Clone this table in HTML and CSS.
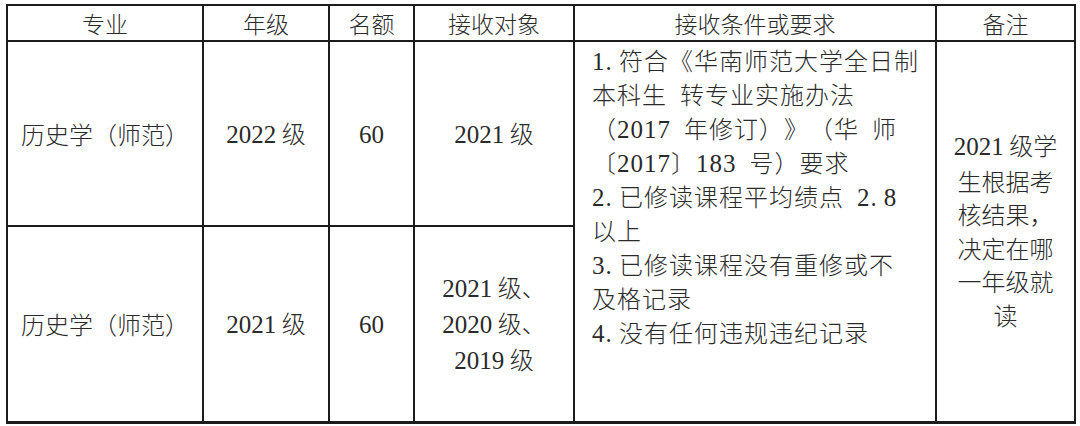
FILE: index.html
```html
<!DOCTYPE html>
<html lang="zh-CN">
<head>
<meta charset="utf-8">
<title>转专业接收表</title>
<link rel="stylesheet" href="styles.css">
</head>
<body>
<table class="grid">
  <colgroup>
    <col class="c1"><col class="c2"><col class="c3"><col class="c4"><col class="c5"><col class="c6">
  </colgroup>
  <tr class="head">
    <th>专业</th><th>年级</th><th>名额</th><th>接收对象</th><th>接收条件或要求</th><th>备注</th>
  </tr>
  <tr class="r1">
    <td>历史学（师范）</td>
    <td><span class="num">2022</span> 级</td>
    <td><span class="num">60</span></td>
    <td><span class="num">2021</span> 级</td>
    <td rowspan="2" class="req">
      <div class="line"><span class="num">1.</span> 符合《华南师范大学全日制</div>
      <div class="line">本科生&ensp;转专业实施办法</div>
      <div class="line">（<span class="num">2017</span>&ensp;年修订）》（华&ensp;师</div>
      <div class="line">〔<span class="num">2017</span>〕<span class="num">183</span>&ensp;号）要求</div>
      <div class="line"><span class="num">2.</span> 已修读课程平均绩点&ensp;<span class="num">2.&thinsp;8</span></div>
      <div class="line">以上</div>
      <div class="line"><span class="num">3.</span> 已修读课程没有重修或不</div>
      <div class="line">及格记录</div>
      <div class="line"><span class="num">4.</span> 没有任何违规违纪记录</div>
    </td>
    <td rowspan="2" class="note"><span class="num">2021</span> 级学<br>生根据考<br>核结果，<br>决定在哪<br>一年级就<br>读</td>
  </tr>
  <tr class="r2">
    <td>历史学（师范）</td>
    <td><span class="num">2021</span> 级</td>
    <td><span class="num">60</span></td>
    <td><span class="num">2021</span> 级、<br><span class="num">2020</span> 级、<br><span class="num">2019</span> 级</td>
  </tr>
</table>
</body>
</html>
```
FILE: styles.css
```css
html, body {
  margin: 0;
  padding: 0;
  background: #ffffff;
}

body {
  padding: 4px 0 0 6px;
  color: #2a2a2a;
  font-family: "Noto Sans CJK SC", sans-serif;
  font-size: 24px;
  font-weight: 300;
  text-spacing-trim: space-all;
}

.num {
  font-family: "Liberation Serif", serif;
  font-weight: 400;
  font-size: 25px;
  letter-spacing: 0;
}

.grid {
  border-collapse: collapse;
  table-layout: fixed;
  width: 1068px;
}

.c1 { width: 196px; }
.c2 { width: 126px; }
.c3 { width: 85px; }
.c4 { width: 160px; }
.c5 { width: 362px; }
.c6 { width: 139px; }

.grid th,
.grid td {
  border: 2px solid #1c1c1c;
  padding: 0;
  text-align: center;
  vertical-align: middle;
  font-weight: 300;
  line-height: 34px;
  white-space: nowrap;
  overflow: hidden;
}

.grid tr:last-child td,
.grid td[rowspan] {
  border-bottom-width: 3px;
}

.head th {
  height: 34px;
  line-height: 30px;
  font-size: 23px;
}

.r1 td { height: 183px; }
.r2 td { height: 194px; }

.req {
  text-align: left !important;
  vertical-align: top !important;
  padding: 1px 0 0 17px !important;
  letter-spacing: 1px;
}

.req .num {
  letter-spacing: 1px;
}

.line {
  height: 34px;
}

.note {
  line-height: 33.5px !important;
  padding-bottom: 4px !important;
}
```
